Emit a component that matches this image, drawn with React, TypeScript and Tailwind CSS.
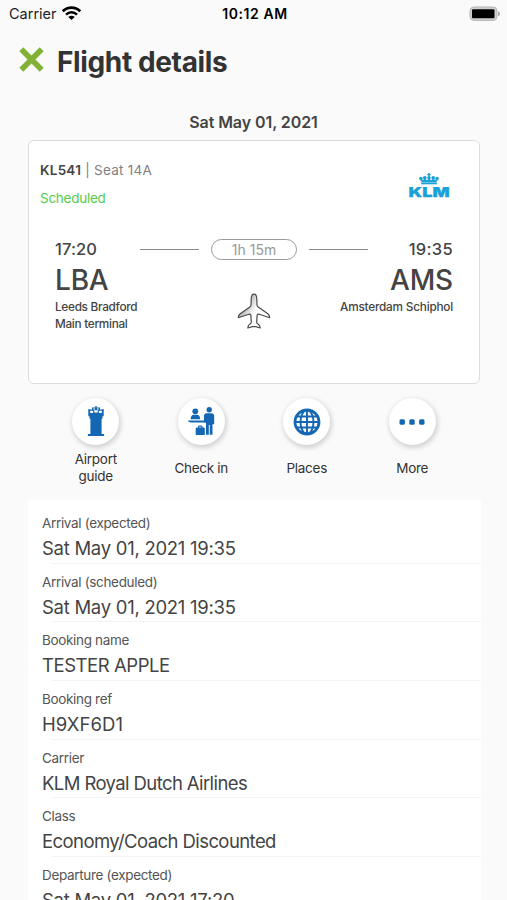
import type { ReactNode } from 'react';

const details = [
    { label: 'Arrival (expected)', value: 'Sat May 01, 2021 19:35', tracking: 'tracking-[-0.270px]' },
    { label: 'Arrival (scheduled)', value: 'Sat May 01, 2021 19:35', tracking: 'tracking-[-0.270px]' },
    { label: 'Booking name', value: 'TESTER APPLE', tracking: 'tracking-[-0.450px]' },
    { label: 'Booking ref', value: 'H9XF6D1', tracking: 'tracking-[0.100px]' },
    { label: 'Carrier', value: 'KLM Royal Dutch Airlines', tracking: 'tracking-[-0.600px]' },
    { label: 'Class', value: 'Economy/Coach Discounted', tracking: 'tracking-[-0.580px]' },
    { label: 'Departure (expected)', value: 'Sat May 01, 2021 17:20', tracking: 'tracking-[-0.270px]' },
];

function WifiIcon() {
    return (
        <svg width="19" height="15" viewBox="0 0 19 15" fill="none" stroke="#000">
            <path d="M.8 5.200C5.600.400 13.400.400 18.200 5.200" strokeWidth="2.700" />
            <path d="M4 8.600c3.200-3 7.800-3 11 0" strokeWidth="2.500" />
            <path d="M9.500 14 6.300 10.900c1.800-1.600 4.600-1.600 6.400 0z" fill="#000" stroke="none" />
        </svg>
    );
}

function BatteryIcon() {
    return (
        <svg width="32" height="16" viewBox="0 0 32 16">
            <rect x="1" y="1" width="27" height="13.400" rx="4" fill="#d0d0d0" stroke="#b5b5b5" />
            <rect x="3" y="3.200" width="22.500" height="9" rx="1" fill="#000" />
            <path d="M29 5.200c2.600.8 2.600 4.200 0 5z" fill="#a9a9a9" />
        </svg>
    );
}

function KlmLogo() {
    return (
        <svg className="overflow-visible" width="42" height="25" viewBox="0 0 42 25" fill="#1ba0d8">
            <path d="M20.300 0h1.500v1h1v1.300h-1v1.200h-1.500V2.300h-1V1h1z" />
            <circle cx="21" cy="4.800" r="1.800" />
            <circle cx="12.900" cy="5.600" r="1.800" />
            <circle cx="16.800" cy="4.700" r="1.800" />
            <circle cx="25.200" cy="4.700" r="1.800" />
            <circle cx="29.100" cy="5.600" r="1.800" />
            <path d="M12.200 6l2.300 1.300L16.800 5.500 19 7.200l2-1.800 2 1.800 2.200-1.700 2.300 1.800L29.800 6l-1.500 3.200H13.700z" />
            <rect x="13.200" y="9.500" width="15.600" height="1.800" />
            <text x="0.600" y="23.600" fontFamily="Inter, sans-serif" fontWeight="900" fontSize="13.500" textLength="41" lengthAdjust="spacingAndGlyphs" stroke="#1ba0d8" strokeWidth="0.250">KLM</text>
        </svg>
    );
}

function PlaneIcon() {
    return (
        <svg width="34" height="37" viewBox="0 0 34 37">
            <defs>
                <linearGradient id="plane" x1="0" y1="0" x2="1" y2="0.600">
                    <stop offset="0.350" stopColor="#bdbdbd" />
                    <stop offset="0.600" stopColor="#fff" />
                </linearGradient>
            </defs>
            <path
                d="M17 1.200c-1.700 0-2.700 2-2.800 4.600l-.2 6.200c-.1 1-.6 1.600-1.500 2.300L3.200 20.800c-1.300.9-1.800 2-1.900 3.900l10.500-3.400c1.300-.3 2 .1 2.100 1.300l.4 6.600c0 .8-.4 1.300-1.300 1.800-1.600.9-2.100 1.900-2.200 4l4.500-1.300h3.400l4.500 1.300c-.1-2.100-.6-3.100-2.200-4-.9-.5-1.300-1-1.300-1.800l.4-6.600c.1-1.200.8-1.600 2.100-1.300l10.500 3.400c-.1-1.900-.6-3-1.900-3.900l-9.300-6.500c-.9-.7-1.400-1.300-1.500-2.300l-.2-6.200c-.1-2.600-1.100-4.600-2.800-4.600z"
                fill="url(#plane)"
                stroke="#4a4a4a"
                strokeWidth="1.200"
                strokeLinejoin="round"
            />
        </svg>
    );
}

function TowerIcon() {
    return (
        <svg width="18" height="31" viewBox="0 0 18 31" fill="#1468b3">
            <path d="M8.300 0h1.400v1.600H13v2h2.500v-.7h1.200v7.400h-1.200v2.400h-.9v15.400h2.500v1.900H.9v-1.900h2.500V12.700h-.9v-2.400H1.300V2.900h1.200v.7H5v-2h3.300z" />
            <path d="M3.200 4.700h2.900v2.300H3.200zM7.200 4.300h3.600v2.300H7.200zM11.900 4.700h2.900v2.300h-2.900zM6.200 2.600h1.900v.9H6.200zM9.900 2.600h1.900v.9H9.900z" fill="#fff" />
        </svg>
    );
}

function CheckInIcon() {
    return (
        <svg width="27" height="29" viewBox="0 0 27 29" fill="#1468b3">
            <circle cx="7.300" cy="4.300" r="2.900" />
            <path d="M2.600 12.300c.2-3 1.200-4.500 3-4.500h3.600c1.800 0 2.800 1.500 3 4.500z" />
            <path d="M.2 13.400h18v2.100H2.700L.2 14.500z" />
            <circle cx="21.200" cy="2.700" r="2.700" />
            <path d="M18.700 6.200h4.600c2 0 2.900 1 2.900 2.800v8.300h-1.700v10.500h-2.800V18h-.9v9.800H18V15.500l-2-.1V9c0-1.800.9-2.800 2.700-2.800z" />
            <path d="M10 20.500v-.6c0-1 .5-1.500 1.500-1.500h1.500c1 0 1.500.5 1.500 1.500v.6h1c.9 0 1.300.5 1.300 1.300V28H7.700v-6.200c0-.8.4-1.300 1.300-1.300zm1.200 0h2.100v-.8h-2.100z" />
        </svg>
    );
}

function GlobeIcon() {
    return (
        <svg width="28" height="28" viewBox="0 0 28 28" fill="none" stroke="#1468b3" strokeWidth="1.900">
            <circle cx="14" cy="14" r="12" strokeWidth="2.800" />
            <ellipse cx="14" cy="14" rx="6.500" ry="12" />
            <path d="M14 2v24M2 14h24M4 8.500h20M4 19.500h20" />
        </svg>
    );
}

function DotsIcon() {
    return (
        <svg width="26" height="6" viewBox="0 0 26 6" fill="#1468b3">
            <rect x="0.500" y="0.300" width="5.400" height="5.400" rx="1.500" />
            <rect x="10.300" y="0.300" width="5.400" height="5.400" rx="1.500" />
            <rect x="20.100" y="0.300" width="5.400" height="5.400" rx="1.500" />
        </svg>
    );
}

function Action({ icon, children }: { icon: ReactNode; children: ReactNode }) {
    return (
        <div className="flex flex-col items-center">
            <div className="flex h-[47px] w-[47px] items-center justify-center rounded-full bg-white shadow-[1px_2px_5px_1px_rgba(0,0,0,0.16)]">
                {icon}
            </div>
            <div className="mt-[6px] flex h-[34px] items-center text-center text-[13.500px] leading-[17px] tracking-[-0.280px] text-[#333]">
                {children}
            </div>
        </div>
    );
}

export default function App() {
    return (
        <main className="flex h-[900px] w-full flex-col overflow-hidden bg-[#fafafa] font-['Inter',sans-serif] text-[#444]">
            <div className="grid h-[27px] shrink-0 grid-cols-3 items-center pr-[6px] pl-[9px] text-black">
                <div className="flex items-center gap-[5px] text-[14.500px] text-[#222]">
                    <span>Carrier</span>
                    <WifiIcon />
                </div>
                <span className="text-center text-[14px] font-semibold tracking-[0.550px] whitespace-nowrap">10:12 AM</span>
                <div className="flex justify-end">
                    <BatteryIcon />
                </div>
            </div>

            <header className="flex h-[68px] shrink-0 items-center pt-px pl-[19px]">
                <svg className="-mt-[4px]" width="25" height="25" viewBox="0 0 25 25" stroke="#83b135" strokeWidth="5.600">
                    <path d="M2.300 2.300 22.700 22.700M22.700 2.300 2.300 22.700" />
                </svg>
                <h1 className="ml-[13px] text-[28px] font-bold tracking-[-0.370px] text-[#333]">Flight details</h1>
            </header>

            <p className="mt-[17px] h-[20px] shrink-0 text-center text-[16px] leading-[20px] font-semibold tracking-[-0.080px] text-[#444]">
                Sat May 01, 2021
            </p>

            <section className="mx-[28px] mt-[8px] flex h-[244px] w-[452px] shrink-0 flex-col rounded-[6px] border border-[#dcdcdc] bg-white">
                <div className="flex justify-between pt-[19px] pr-[29px] pl-[11px]">
                    <div className="text-[13.500px] leading-[20px]">
                        <p className="tracking-[0.250px] text-[#808080]">
                            <span className="font-semibold text-[#444]">KL541</span> | Seat 14A
                        </p>
                        <p className="mt-[8px] tracking-[-0.250px] text-[#56cc4a]">Scheduled</p>
                    </div>
                    <div className="mt-[13px]">
                        <KlmLogo />
                    </div>
                </div>

                <div className="mt-[29px] flex px-[26px]">
                    <div className="w-[85px] whitespace-nowrap">
                        <p className="text-[16.500px] leading-[24px] font-medium tracking-[0.100px]">17:20</p>
                        <p className="text-[28px] leading-[38px] font-medium tracking-[-0.200px]">LBA</p>
                        <p className="text-[11.800px] leading-[17px] font-medium tracking-[-0.300px]">Leeds Bradford</p>
                        <p className="text-[11.800px] leading-[17px] font-medium tracking-[-0.300px]">Main terminal</p>
                    </div>
                    <div className="flex w-[228px] flex-col items-center">
                        <div className="flex h-[24px] items-center gap-[12px]">
                            <div className="h-px w-[59px] bg-[#8a8a8a]" />
                            <div className="flex h-[21px] w-[86px] items-center justify-center rounded-full border-[1.500px] border-[#999] text-[14px] tracking-[0.050px] text-[#999]">
                                1h 15m
                            </div>
                            <div className="h-px w-[59px] bg-[#8a8a8a]" />
                        </div>
                        <div className="mt-[32px]">
                            <PlaneIcon />
                        </div>
                    </div>
                    <div className="flex w-[85px] flex-col items-end whitespace-nowrap">
                        <p className="text-[16.500px] leading-[24px] font-medium tracking-[0.300px]">19:35</p>
                        <p className="text-[28px] leading-[38px] font-medium tracking-[-0.200px]">AMS</p>
                        <p className="text-[11.800px] leading-[17px] font-medium tracking-[-0.220px]">Amsterdam Schiphol</p>
                    </div>
                </div>
            </section>

            <nav className="mx-[43px] mt-[14px] grid w-[422px] shrink-0 grid-cols-4">
                <Action icon={<TowerIcon />}>
                    Airport
                    <br />
                    guide
                </Action>
                <Action icon={<CheckInIcon />}>Check in</Action>
                <Action icon={<GlobeIcon />}>Places</Action>
                <Action icon={<DotsIcon />}>More</Action>
            </nav>

            <section className="mx-[28px] mt-[15px] w-[453px] shrink-0 bg-white pt-[5px]">
                {details.map(item => (
                    <div key={item.label} className="flex h-[58.650px] flex-col whitespace-nowrap">
                        <p className="mt-[9px] pl-[14px] text-[13.500px] leading-[18px] tracking-[-0.330px] text-[#555]">{item.label}</p>
                        <p className={`mt-[3px] pl-[14px] text-[18.500px] leading-[26px] text-[#444] ${item.tracking}`}>{item.value}</p>
                        <div className="mt-auto ml-[24px] h-px shrink-0 bg-[#f3f3f3]" />
                    </div>
                ))}
            </section>
        </main>
    );
}
